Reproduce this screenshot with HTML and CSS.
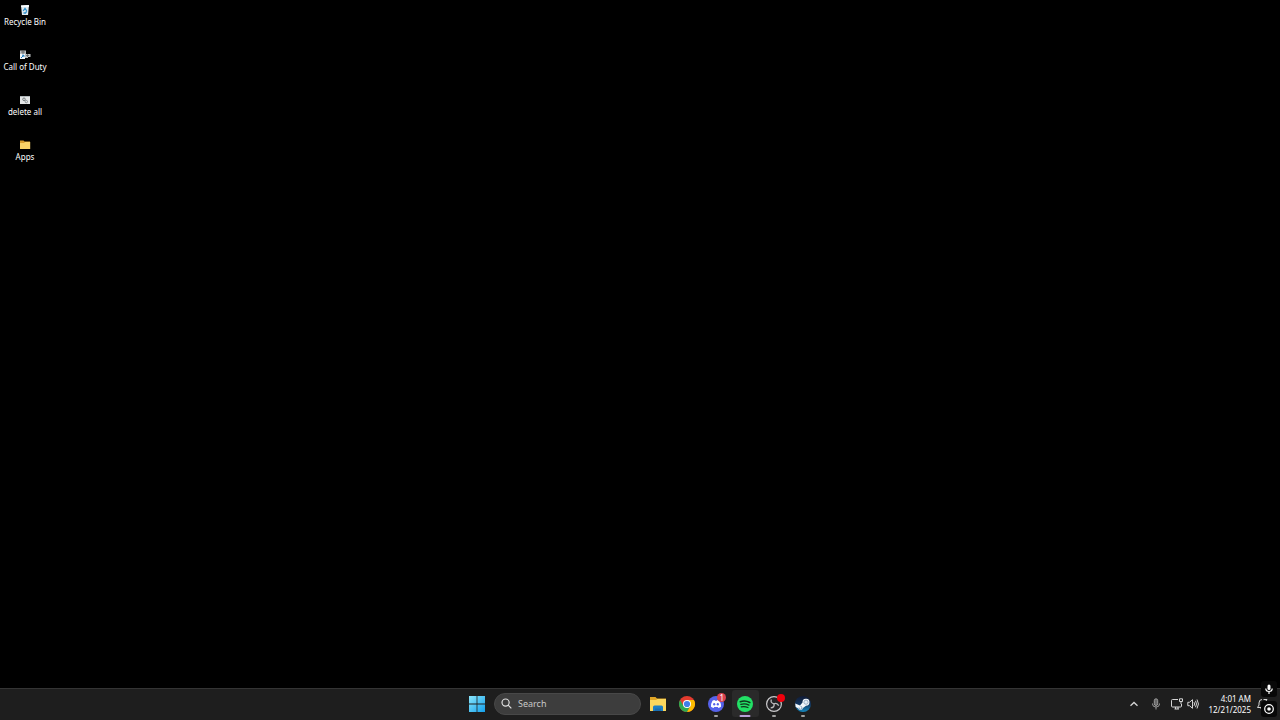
FILE: index.html
```html
<!DOCTYPE html>
<html lang="en">
<head>
    <meta charset="UTF-8">
    <title>Desktop</title>
    <link rel="stylesheet" href="styles.css">
</head>
<body>
    <main class="desktop">
        <button class="shortcut">
            <svg viewBox="0 0 12 12">
                <path d="M2 1.5 10 1 9 11H3z" fill="#dfe9ee"/>
                <path d="M2 1.5 10 1 9.800 3H2.200z" fill="#fafdff"/>
                <path d="M4.200 7 6 4.300 7.800 7M7.800 7.200 6.500 9H4.500" fill="none" stroke="#2c8fcb" stroke-width="1.300"/>
            </svg>
            <span>Recycle Bin</span>
        </button>
        <button class="shortcut">
            <svg viewBox="0 0 12 12">
                <path d="M1 1.500H7V5H11.500V8H9V9H1z" fill="#b9bdbf"/>
                <path d="M2 3H6M7 6.500H10M4 1.500V5M8.500 5V8" stroke="#5a5d60" stroke-width=".8"/>
                <path d="M1 5H6V10H1z" fill="#f3f8fb"/>
                <path d="M2 9 4.600 6.400M3 6.200H4.900V8" fill="none" stroke="#1b79bd"/>
            </svg>
            <span>Call of Duty</span>
        </button>
        <button class="shortcut">
            <svg viewBox="0 0 12 12">
                <path d="M1 2H11V10H1z" fill="#e4e6e6"/>
                <path d="M1 2H11V3H1z" fill="#b2b8bb"/>
                <circle cx="5" cy="5.300" r="1.300" fill="none" stroke="#777d80"/>
                <circle cx="7.300" cy="7.600" r="1.200" fill="none" stroke="#8b9194"/>
            </svg>
            <span>delete all</span>
        </button>
        <button class="shortcut">
            <svg viewBox="0 0 12 12">
                <path d="M1 1.500H4.500L5.500 2.500H11V6H1z" fill="#d79d2d"/>
                <path d="M1 4H5L6 3H11.200V10H1z" fill="#f9d368"/>
            </svg>
            <span>Apps</span>
        </button>
    </main>

    <footer class="taskbar">
        <div class="taskbar-center">
            <button class="start" aria-label="Start">
                <svg viewBox="0 0 16 16">
                    <defs>
                        <linearGradient id="win" x1="0" y1="0" x2="16" y2="16" gradientUnits="userSpaceOnUse">
                            <stop offset="0" stop-color="#8be6fb"/>
                            <stop offset="1" stop-color="#13a0ec"/>
                        </linearGradient>
                    </defs>
                    <path d="M0 0H7.600V7.600H0zM8.400 0H16V7.600H8.400zM0 8.400H7.600V16H0zM8.400 8.400H16V16H8.400z" fill="url(#win)"/>
                </svg>
            </button>

            <label class="search">
                <svg viewBox="0 0 12 12">
                    <circle cx="5" cy="5" r="3.900"/>
                    <path d="M7.800 7.800 11.300 11.300"/>
                </svg>
                <input type="text" placeholder="Search" aria-label="Search">
            </label>

            <div class="apps">
                <button class="app" aria-label="File Explorer">
                    <svg viewBox="0 0 18 18">
                        <path d="M1 2H6.500L8 3.500H17V8H1z" fill="#e0a526"/>
                        <path d="M1 5H7L8.500 4H17V16H1z" fill="#fbd75e"/>
                        <path d="M4 16V12Q4 10.500 5.500 10.500H12.500Q14 10.500 14 12V16z" fill="#1d7fc4"/>
                        <path d="M6 13.500H12V16H6z" fill="#1a6db0"/>
                    </svg>
                </button>
                <button class="app" aria-label="Chrome">
                    <svg viewBox="0 0 18 18">
                        <circle cx="9" cy="9" r="8" fill="#e33b2e"/>
                        <path d="M2.070 5A8 8 0 0 0 9 17L12.460 11 9 9 5.540 11z" fill="#2da94f"/>
                        <path d="M9 17A8 8 0 0 0 15.930 5H9L12.460 11z" fill="#fdbd00"/>
                        <circle cx="9" cy="9" r="4" fill="#fff"/>
                        <circle cx="9" cy="9" r="3.100" fill="#3f7fe8"/>
                    </svg>
                </button>
                <button class="app running" aria-label="Discord">
                    <svg viewBox="0 0 18 18">
                        <circle cx="9" cy="9" r="8" fill="#5662ea"/>
                        <path d="M5.500 5.700Q6.500 5.100 7.600 5L8 5.700H10L10.400 5Q11.500 5.100 12.500 5.700 14.200 8.500 14 11.700 12.800 12.700 11.400 12.900L10.800 12H7.200L6.600 12.900Q5.200 12.700 4 11.700 3.800 8.500 5.500 5.700z" fill="#fff"/>
                        <ellipse cx="7.200" cy="9.300" rx="1.100" ry="1.200" fill="#5662ea"/>
                        <ellipse cx="10.800" cy="9.300" rx="1.100" ry="1.200" fill="#5662ea"/>
                    </svg>
                    <span class="badge">1</span>
                </button>
                <button class="app running active" aria-label="Spotify">
                    <svg viewBox="0 0 18 18">
                        <circle cx="9" cy="9" r="8" fill="#22e065"/>
                        <g fill="none" stroke="#10331c" stroke-linecap="round">
                            <path d="M4.300 6.700Q9.300 5.100 13.800 7.500" stroke-width="1.600"/>
                            <path d="M4.800 9.400Q9.100 8.200 12.900 10.100" stroke-width="1.300"/>
                            <path d="M5.200 11.900Q8.900 11 12 12.600" stroke-width="1.100"/>
                        </g>
                    </svg>
                </button>
                <button class="app running" aria-label="OBS Studio">
                    <svg viewBox="0 0 18 18">
                        <circle cx="9" cy="9" r="7.400" fill="#242326" stroke="#c9c8ca" stroke-width="1.200"/>
                        <g fill="none" stroke="#bdbcbe" stroke-width="1.300">
                            <path d="M6.400 4.600Q5 7.800 9 8.800"/>
                            <path d="M13.700 10.600Q12 7.500 9 8.800"/>
                            <path d="M5.700 12.900Q9.700 12.700 9 8.800"/>
                        </g>
                    </svg>
                    <span class="record-dot"></span>
                </button>
                <button class="app running" aria-label="Steam">
                    <svg viewBox="0 0 18 18">
                        <defs>
                            <linearGradient id="steam" x1="0" y1="0" x2="0" y2="1">
                                <stop offset="0" stop-color="#111a33"/>
                                <stop offset=".5" stop-color="#12355f"/>
                                <stop offset="1" stop-color="#1689bf"/>
                            </linearGradient>
                        </defs>
                        <circle cx="9" cy="9" r="8" fill="url(#steam)"/>
                        <path d="M1.200 8.500 6 10.500 8.500 7.500A3.500 3.500 0 1 1 12 10.700L9 13A2.600 2.600 0 0 1 4 13.200L1.700 12z" fill="#f4f7fa"/>
                        <circle cx="12" cy="7.200" r="2.100" fill="#e4edf5" stroke="#7f96b0" stroke-width=".7"/>
                        <path d="M5 12.500A1.500 1.500 0 1 0 6.500 11.300" fill="none" stroke="#5d83a5" stroke-width=".7"/>
                    </svg>
                </button>
            </div>
        </div>

        <div class="tray">
            <button class="tray-button" aria-label="Show hidden icons">
                <svg viewBox="0 0 12 12"><path d="M2.500 7.700 6 4.500 9.500 7.700" stroke-width="1.300"/></svg>
            </button>
            <button class="tray-button microphone" aria-label="Microphone">
                <svg viewBox="0 0 12 12">
                    <rect x="4.300" y=".8" width="3.400" height="6.700" rx="1.700" fill="#666"/>
                    <path d="M2.500 5.500V6Q2.500 9 6 9T9.500 6V5.500M6 9V11.500"/>
                </svg>
            </button>
            <button class="tray-button status" aria-label="Network and volume">
                <svg viewBox="0 0 12 12">
                    <path d="M7 1.500H1.500Q.5 1.500 .5 2.500V8Q.5 9 1.500 9H9.500Q10.500 9 10.500 8V6M3.500 11H8M4.500 9V11M7 9V11"/>
                    <path d="M8.500 .8H11.500V3.500H8.500zM10 3.500V6"/>
                </svg>
                <svg viewBox="0 0 12 12">
                    <path d="M.8 4.300H2.500L5.500 1.700V10.300L2.500 7.700H.8z"/>
                    <path d="M7 4.200Q8.200 6 7 7.800M8.500 2.800Q10.500 6 8.500 9.200M10 1.500Q12.900 6 10 10.500"/>
                </svg>
            </button>
            <button class="clock">
                <time datetime="04:01">4:01 AM</time>
                <time datetime="2025-12-21">12/21/2025</time>
            </button>
            <button class="tray-button bell" aria-label="Notifications">
                <svg viewBox="0 0 12 12">
                    <path d="M6 1.500Q3 1.500 3 5V7L1.500 9.500H10.500M4.500 9.500Q5 11.500 7 11.500"/>
                    <path d="M7.500 1.500H11L8 5.500H11"/>
                </svg>
            </button>
        </div>
    </footer>

    <!-- recording overlay, stays on top of everything -->
    <aside class="overlay">
        <svg viewBox="0 0 16 16">
            <rect x="6.500" y="3.500" width="3" height="5.500" rx="1.500" fill="#fff" stroke="none"/>
            <path d="M4.800 7.500Q4.800 10.500 8 10.500T11.200 7.500M8 10.500V13"/>
        </svg>
        <svg viewBox="0 0 16 16">
            <circle cx="8" cy="8" r="4.300"/>
            <circle cx="8" cy="8" r="1.800" fill="#fff" stroke="none"/>
        </svg>
    </aside>
</body>
</html>
```

FILE: styles.css
```css
* {
    box-sizing: border-box;
}
body {
    margin: 0;
    min-height: 100vh;
    display: flex;
    flex-direction: column;
    background-color: #000;
    color: #fff;
    font-family: "Noto Sans", "Open Sans", sans-serif;
    font-size: 8px;
    line-height: 11px;
}
button {
    padding: 0;
    border: none;
    background: none;
    color: inherit;
    font: inherit;
}
svg {
    display: block;
    flex: none;
}

/* Desktop */
.desktop {
    flex: 1;
    display: flex;
    flex-direction: column;
    align-items: flex-start;
    gap: 17px;
    padding-top: 4px;
}
.shortcut {
    width: 50px;
    height: 28px;
    display: flex;
    flex-direction: column;
    align-items: center;
    white-space: nowrap;
}
.shortcut svg {
    width: 12px;
    height: 12px;
}

/* Taskbar */
.taskbar {
    height: 32px;
    display: grid;
    grid-template-columns: 1fr auto 1fr;
    padding-bottom: 2px;
    border-top: 1px solid #343434;
    background-color: #1e1e1e;
}
.taskbar-center {
    grid-column: 2;
    display: flex;
    align-items: center;
    gap: 3px;
}
.start {
    width: 28px;
    display: flex;
    justify-content: center;
}
.start svg {
    width: 16px;
    height: 16px;
}
.search {
    width: 147px;
    height: 22px;
    display: flex;
    align-items: center;
    gap: 6px;
    padding: 0 6px;
    border: 1px solid #484848;
    border-radius: 11px;
    background-color: #3d3d3d;
}
.search svg {
    width: 11px;
    height: 11px;
    fill: none;
    stroke: #e0e0e0;
    stroke-width: 1.3;
}
.search input {
    flex: 1;
    min-width: 0;
    padding: 0;
    border: none;
    outline: none;
    background: none;
    color: #fff;
    font: inherit;
    font-size: 9px;
}
.search input::placeholder {
    color: #c8c8c8;
    opacity: 1;
}
.apps {
    width: 173px;
    display: flex;
    justify-content: space-between;
}
.app {
    position: relative;
    width: 27px;
    height: 27px;
    display: flex;
    align-items: center;
    justify-content: center;
    border-radius: 3px;
}
.app svg {
    width: 18px;
    height: 18px;
}
.app.active {
    background-color: #2a2a2a;
}
.app.running::after {
    content: "";
    position: absolute;
    bottom: 0;
    left: 50%;
    width: 4px;
    height: 2px;
    border-radius: 1px;
    background-color: #a0a0a0;
    transform: translateX(-50%);
}
.app.active::after {
    width: 11px;
    background-color: #b9a0d8;
}
.badge {
    position: absolute;
    top: 3px;
    right: 3px;
    width: 9px;
    height: 9px;
    border-radius: 50%;
    background-color: #d9424f;
    line-height: 9px;
}
.record-dot {
    position: absolute;
    top: 4px;
    right: 3px;
    width: 8px;
    height: 8px;
    border-radius: 50%;
    background-color: #f0000c;
}

/* Tray */
.tray {
    display: flex;
    align-items: center;
    justify-content: flex-end;
    padding-right: 9px;
}
.tray-button {
    width: 22px;
    display: flex;
    justify-content: center;
}
.tray-button svg {
    width: 12px;
    height: 12px;
    fill: none;
    stroke: #d5d5d5;
}
.microphone svg {
    stroke: #999;
}
.status {
    width: 36px;
    gap: 4px;
}
.clock {
    width: 50px;
    display: flex;
    flex-direction: column;
    padding-right: 2px;
    text-align: right;
}
.bell {
    width: 18px;
}

/* Overlay */
.overlay {
    position: fixed;
    right: 3px;
    bottom: 3px;
    display: flex;
    flex-direction: column;
    gap: 4px;
}
.overlay svg {
    width: 16px;
    height: 16px;
    border-radius: 3px;
    background-color: #080808;
    fill: none;
    stroke: #fff;
    stroke-width: 1.2;
}
```
